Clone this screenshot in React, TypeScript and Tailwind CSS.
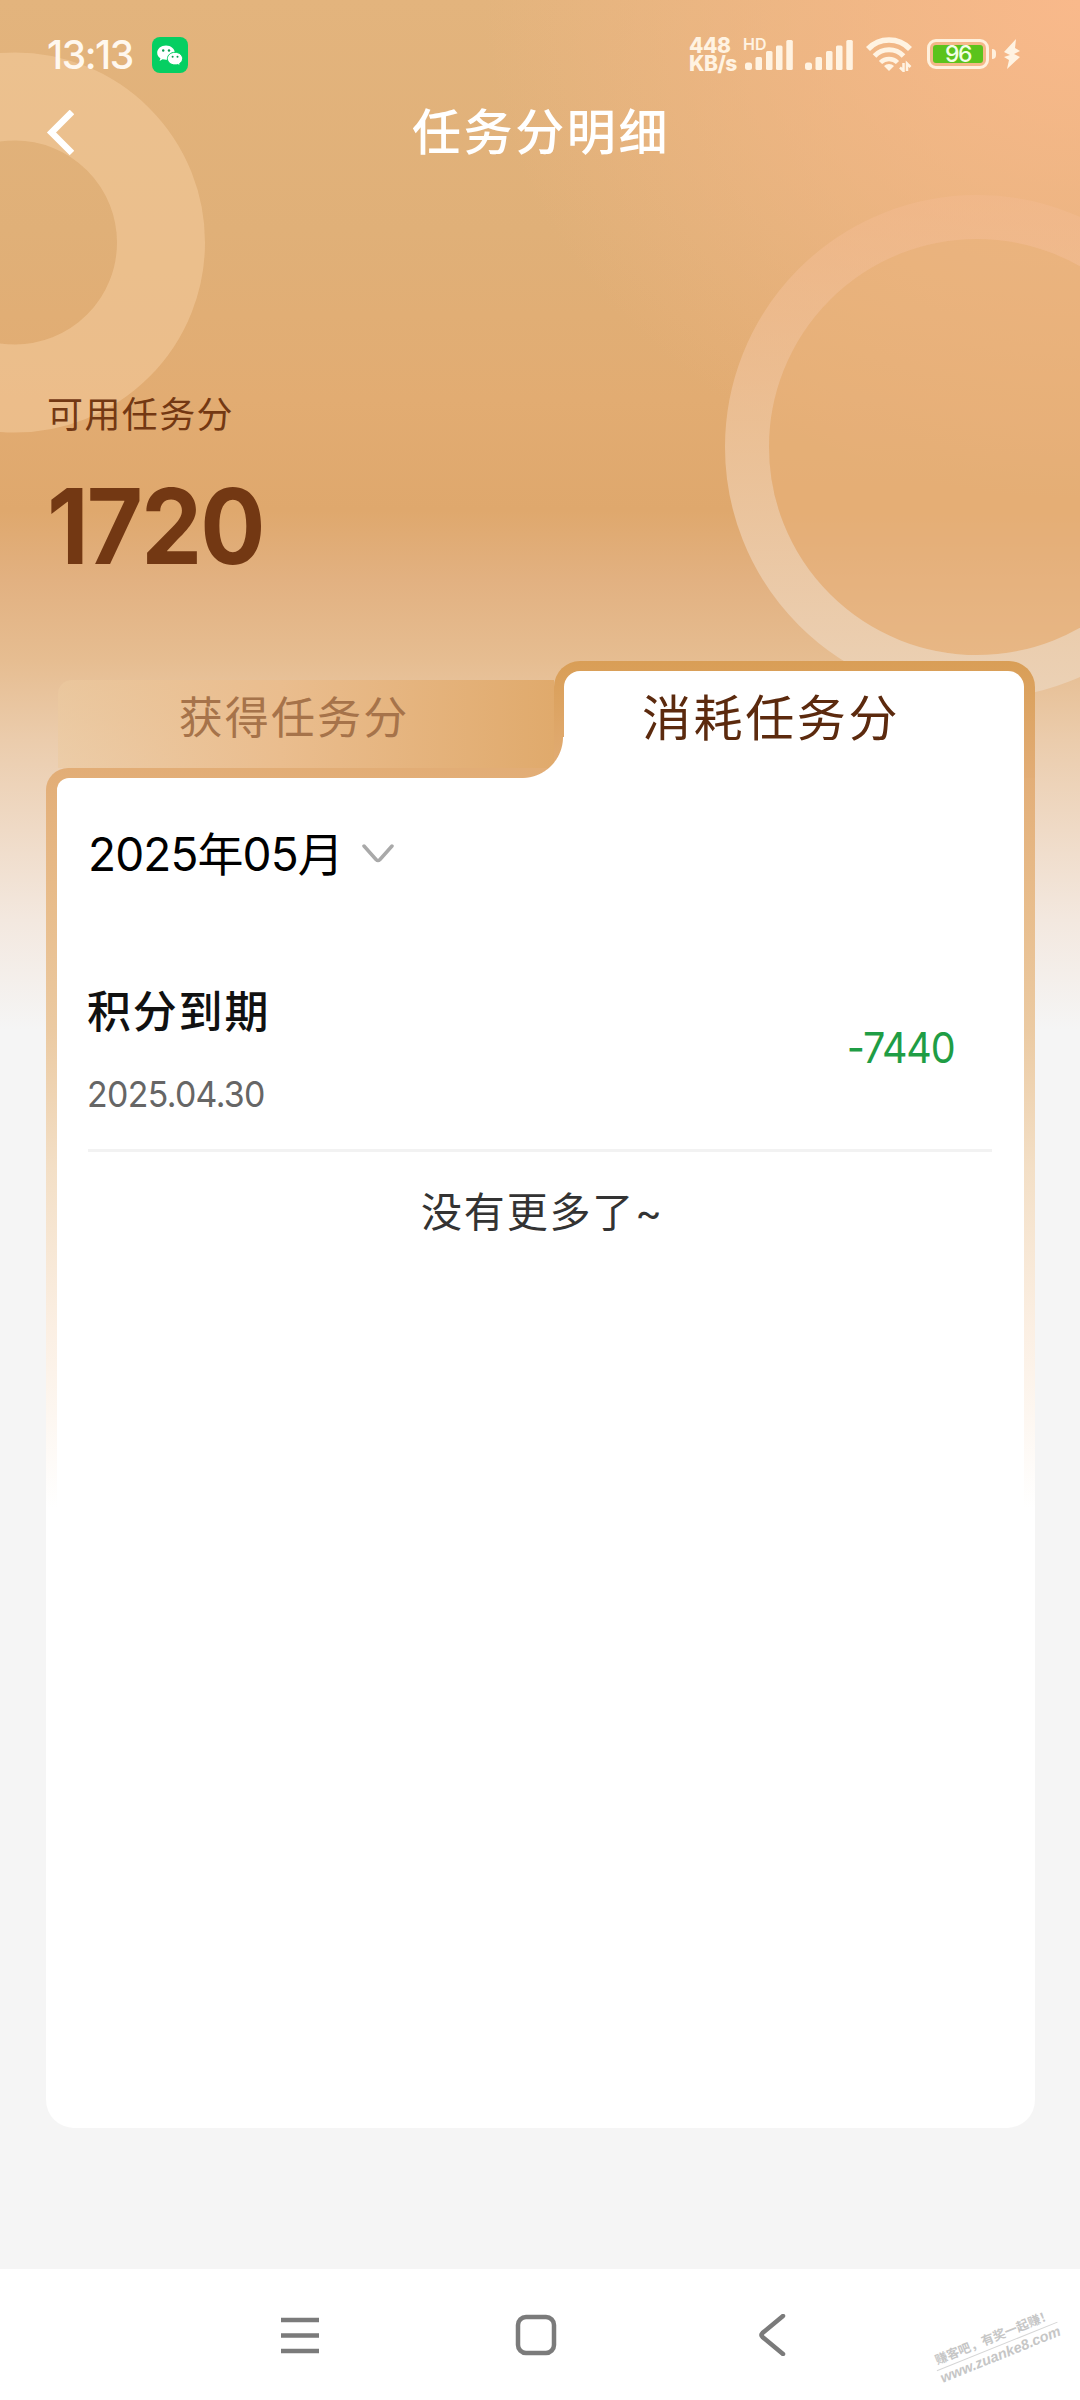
import type { ReactNode } from "react";
import clsx from "clsx";

type ScoreRecord = {
  id: number;
  title: string;
  date: string;
  amount: string;
};

const records: ScoreRecord[] = [
  { id: 1, title: "积分到期", date: "2025.04.30", amount: "-7440" },
];

function WeChatBadge() {
  return (
    <svg viewBox="0 0 36 36" className="h-9 w-9">
      <rect width="36" height="36" rx="8" fill="#05cf62" />
      <path
        d="M14 8.5c-4.900 0-8.800 3.200-8.800 7.200 0 2.300 1.200 4.200 3.200 5.600l-.8 2.600 3-1.600c1 .3 2.200.5 3.400.5 4.900 0 8.800-3.200 8.800-7.100S18.900 8.500 14 8.500z"
        fill="#fff"
      />
      <path
        d="M23 15.300c-4.300 0-7.600 2.900-7.600 6.300 0 3.500 3.300 6.300 7.600 6.300 1 0 1.900-.1 2.700-.4l2.500 1.300-.6-2.200c1.900-1.200 3-2.900 3-5 0-3.400-3.300-6.300-7.600-6.300z"
        fill="#fff"
        stroke="#05cf62"
        strokeWidth="1"
      />
      <circle cx="11.200" cy="13.500" r="1.200" fill="#0a9b50" />
      <circle cx="17" cy="13.500" r="1.200" fill="#0a9b50" />
      <circle cx="20.600" cy="19.700" r="1" fill="#0a9b50" />
      <circle cx="25.500" cy="19.700" r="1" fill="#0a9b50" />
    </svg>
  );
}

function SignalBars({ className }: { className?: string }) {
  return (
    <svg viewBox="0 0 48 32" className={clsx("h-8 w-12", className)} fill="#fff3e2">
      <rect x="0" y="22.500" width="7" height="7.500" rx="2.500" />
      <rect x="10.500" y="17" width="6.500" height="13" rx="1.500" />
      <rect x="21" y="11" width="6.500" height="19" rx="1.500" />
      <rect x="31" y="5.500" width="6.500" height="24.500" rx="1.500" />
      <rect x="41.300" y="0" width="6.500" height="30" rx="1.500" />
    </svg>
  );
}

function WifiIcon() {
  return (
    <svg viewBox="0 0 46 36" className="h-9 w-[46px]" fill="none" stroke="#fff3e2">
      <path d="M2 13a29 29 0 0 1 42 0" strokeWidth="5.500" />
      <path d="M8.500 20a20 20 0 0 1 29 0" strokeWidth="5" />
      <path d="M14.500 26.500a12 12 0 0 1 17 0" strokeWidth="4.500" />
      <path d="M23 35l-5-5a7 7 0 0 1 10 0z" fill="#fff3e2" stroke="none" />
      <path d="M37.500 27v8l-3.500-3.500M41 35v-7.500l3.500 3.500" strokeWidth="2.500" />
    </svg>
  );
}

function BatteryIcon() {
  return (
    <div className="flex items-center">
      <div className="h-[30px] w-[62px] rounded-[9px] border-[3.500px] border-[#fff0dc] p-[3px]">
        <div className="flex h-full items-center justify-center rounded-[3px] bg-[#5bc31c] text-[23px] leading-none font-medium tracking-[-1.500px] text-[#f2ffe6]">
          96
        </div>
      </div>
      <div className="ml-[3px] h-[10px] w-[4px] rounded-r-sm bg-[#fff0dc]" />
      <svg viewBox="0 0 18 30" className="ml-[7px] h-[30px] w-[18px]" fill="#fff3e2">
        <path d="M13 0L1 13l6 3-6 2 5 3-2 9 13-12-6-3 6-3-5-3z" />
      </svg>
    </div>
  );
}

function StatusBar() {
  return (
    <div className="flex h-[100px] items-start justify-between pt-[36px] pr-[59px] pl-[47px]">
      <div className="flex items-center text-[39px] leading-9 font-medium tracking-[-1.500px] text-[#fff8ef]">
        <span className="mr-[17px] w-[88px] pt-[1px] whitespace-nowrap">13:13</span>
        <WeChatBadge />
      </div>
      <div className="flex items-start text-[#fff3e2]">
        <div className="w-[56px] pt-[1px] text-[21px] leading-[18px] font-extrabold tracking-[-0.500px]">
          <div>448</div>
          <div>KB/s</div>
        </div>
        <div className="relative pt-1">
          <span className="absolute -top-[2px] -left-[2px] text-[16px] leading-5 font-semibold">HD</span>
          <SignalBars />
        </div>
        <SignalBars className="mt-1 ml-3" />
        <div className="ml-[13px]">
          <WifiIcon />
        </div>
        <div className="mt-[3px] ml-[15px]">
          <BatteryIcon />
        </div>
      </div>
    </div>
  );
}

function NavBar() {
  return (
    <div className="grid h-[65px] grid-cols-[200px_1fr_200px] items-center">
      <button type="button" aria-label="返回" className="pl-[44px]">
        <svg viewBox="0 0 30 46" className="h-[46px] w-[30px]" fill="none" stroke="#fff" strokeWidth="6.500">
          <path d="M28 2L7.500 22.500 28 43" />
        </svg>
      </button>
      <h1 className="pt-[1px] pl-[2px] text-center text-[49px] leading-[62px] font-medium tracking-[2.600px] text-white">
        任务分明细
      </h1>
    </div>
  );
}

// Decorative rings behind the header
function HeaderRings() {
  return (
    <svg viewBox="0 0 1080 1040" className="absolute inset-x-0 top-0 h-[1040px] w-[1080px]" fill="none">
      <defs>
        <linearGradient id="ring" x1="0" y1="196" x2="0" y2="698" gradientUnits="userSpaceOnUse">
          <stop offset="0" stopColor="#f3ba90" stopOpacity="0.5" />
          <stop offset="0.5" stopColor="#edc6a0" stopOpacity="0.8" />
          <stop offset="1" stopColor="#ebd2b7" stopOpacity="0.95" />
        </linearGradient>
      </defs>
      <circle cx="15" cy="242.500" r="146" stroke="#f4cc9e" strokeOpacity="0.55" strokeWidth="88" />
      <circle cx="977" cy="447" r="208" fill="#eab27c" fillOpacity="0.55" />
      <circle cx="977" cy="447" r="230" stroke="url(#ring)" strokeWidth="44" />
    </svg>
  );
}

function Tabs() {
  return (
    <div className="relative flex h-[107px]">
      <div className="w-[508px] pt-[19px] pl-3">
        <button
          type="button"
          className="h-[88px] w-full rounded-tl-[14px] bg-linear-to-r from-[#eccaa0]/60 via-[#eabd8e] via-45% to-[#e0aa6c] pr-[24px] pb-[12px] text-center text-[44px] leading-[76px] tracking-[2.100px] text-[#a6734a]">
          获得任务分
        </button>
      </div>
      <div className="z-10 h-[117px] w-[481px] rounded-t-[26px] bg-linear-to-b from-[#d99e56] to-[#e2ad76] pt-[10px] pr-[11px] pl-[10px]">
        <button
          type="button"
          className="h-full w-full rounded-t-[16px] bg-white pr-[46px] pb-[11px] text-center text-[49px] leading-[96px] tracking-[2.600px] text-[#5c2a0e]">
          消耗任务分
        </button>
      </div>
      {/* inverted corner joining the active tab to the card */}
      <div className="absolute top-[76px] left-[476px] z-20 h-[41px] w-[42px] bg-[radial-gradient(circle_at_0_0,transparent_40.500px,white_41.500px)]" />
    </div>
  );
}

function RecordRow({ record }: { record: ScoreRecord }) {
  return (
    <div className="flex items-center justify-between border-b-[3px] border-[#f2f2f2] pr-[38px] pb-[35px]">
      <div className="-ml-[1px]">
        <div className="text-[44px] leading-[60px] font-medium tracking-[1.800px] text-[#111]">{record.title}</div>
        <div className="mt-[32px] origin-left scale-x-[0.94] text-[36px] leading-10 tracking-[-0.700px] text-[#666]">
          {record.date}
        </div>
      </div>
      <div className="origin-right scale-x-[0.94] text-[42px] leading-[50px] tracking-[-1.200px] text-[#1f9d45]">
        {record.amount}
      </div>
    </div>
  );
}

function SystemButton({ label, children }: { label: string; children: ReactNode }) {
  return (
    <button type="button" aria-label={label} className="flex h-[50px] w-[50px] items-center justify-center">
      <svg viewBox="0 0 42 42" className="h-[42px] w-[42px]" fill="none" stroke="#7b7b7b" strokeWidth="4.500">
        {children}
      </svg>
    </button>
  );
}

export default function App() {
  return (
    <div className="relative flex h-[2400px] w-[1080px] flex-col overflow-hidden bg-[#f5f5f5] font-['Inter','Noto_Sans_CJK_SC',sans-serif]">
      <div className="absolute inset-x-0 top-0 h-[1040px] bg-[radial-gradient(ellipse_600px_500px_at_1080px_0,#f9b98b,transparent),linear-gradient(180deg,#e3b47d_0px,#e0b078_230px,#e2ac72_400px,#dfa86d_510px,#e2b181_580px,#e6bd91_660px,#ebccac_740px,#efdac6_830px,#f3e8df_920px,#f5f5f5_1030px)]" />
      <HeaderRings />

      <header className="relative h-[661px]">
        <StatusBar />
        <NavBar />
        <div className="px-[47px] pt-[220px] text-[#733813]">
          <div className="text-[36px] leading-[60px] tracking-[1.400px]">可用任务分</div>
          <div className="mt-[21px] origin-left scale-x-[0.93] text-[104px] leading-[120px] font-bold tracking-[-2px]">
            1720
          </div>
        </div>
      </header>

      <main className="relative mx-[46px] flex h-[1467px] w-[989px] flex-col">
        <Tabs />
        <div className="flex-1 rounded-tl-[22px] rounded-b-[28px] bg-[linear-gradient(180deg,#e2ad76_0px,#e8bd8c_140px,#ebcaa2_260px,#f3dfc6_400px,#fbefe3_560px,#fff_740px)] px-[11px] pt-[10px]">
          <div className="h-full rounded-tl-[12px] rounded-b-[20px] bg-white px-[31px] pt-[46px]">
            <button type="button" className="flex items-center text-[46px] leading-[60px] tracking-[-0.900px] text-black">
              <span>2025年05月</span>
              <svg viewBox="0 0 32 20" className="ml-[19px] h-5 w-8" fill="none" stroke="#a9a9a9" strokeWidth="3.500">
                <path d="M2 2l12 13.500q2 2 4 0L30 2" strokeLinecap="round" />
              </svg>
            </button>
            <div className="w-[904px] pt-[98px]">
              {records.map((record) => (
                <RecordRow key={record.id} record={record} />
              ))}
            </div>
            <p className="mt-[30px] pl-1 text-center text-[41px] leading-[60px] tracking-[1.800px] text-[#333]">
              没有更多了~
            </p>
          </div>
        </div>
      </main>

      <footer className="relative mt-auto flex h-[131px] items-start bg-white pt-[41px] pl-[275px]">
        <SystemButton label="菜单">
          <path d="M2 6h38M2 21.500h38M2 37h38" />
        </SystemButton>
        <div className="ml-[186px]">
          <SystemButton label="主页">
            <rect x="3" y="3" width="36" height="36" rx="8" />
          </SystemButton>
        </div>
        <div className="ml-[186px]">
          <SystemButton label="返回">
            <path d="M32 2L11.500 19q-2 2 0 4L32 40" strokeLinecap="round" />
          </SystemButton>
        </div>
        <div className="absolute top-[59px] left-[932px] w-[130px] -rotate-[22deg] text-center font-['Liberation_Sans','Noto_Sans_CJK_SC',sans-serif] text-[#c6c6c6]">
          <div className="border-b border-[#d6d6d6] text-[12.500px] leading-[18px] font-bold whitespace-nowrap">
            赚客吧，有奖一起赚！
          </div>
          <div className="text-[14.500px] leading-[17px] font-bold italic">www.zuanke8.com</div>
        </div>
      </footer>
    </div>
  );
}
